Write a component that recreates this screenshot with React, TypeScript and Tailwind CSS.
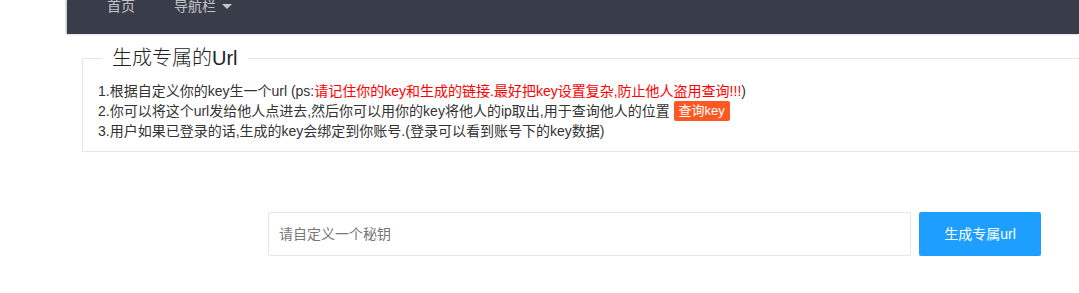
const font = { fontFamily: '"Liberation Sans", "Noto Sans CJK SC", sans-serif' };

export default function App() {
  return (
    <div className="relative w-[1079px] h-[293px] overflow-hidden bg-white text-[14px] text-[#333]" style={font}>
      {/* header, scrolled so only the bottom part shows */}
      <div className="ml-[67px] h-[34px] overflow-hidden bg-[#393D49] shadow-[-1px_0_2px_rgba(0,0,0,0.3)]">
        <div className="-mt-[24px] h-[60px] flex items-center pl-[40px] text-[14px] text-white/70">
          <span>首页</span>
          <span className="ml-[39px] flex items-center gap-[6px]">
            导航栏
            <span className="w-0 h-0 border-x-[5px] border-x-transparent border-t-[5px] border-t-white/70 mt-[1px]" />
          </span>
        </div>
      </div>

      <fieldset className="ml-[82px] mt-[12px] w-[1020px] border border-[#e6e6e6]">
        <legend className="ml-[19px] px-[10px] text-[20px] leading-[24px] font-light text-[#222]">生成专属的Url</legend>
        <div className="px-[15px] pt-[11px] pb-[10px] leading-[20px]">
          <p>
            1.根据自定义你的key生一个url (ps:
            <span className="text-[#ff0000]">请记住你的key和生成的链接.最好把key设置复杂,防止他人盗用查询!!!</span>)
          </p>
          <p>
            2.你可以将这个url发给他人点进去,然后你可以用你的key将他人的ip取出,用于查询他人的位置{' '}
            <span className="inline-block align-top h-[20px] leading-[20px] px-[5px] rounded-[2px] bg-[#FF5722] text-white text-[13px]">查询key</span>
          </p>
          <p>3.用户如果已登录的话,生成的key会绑定到你账号.(登录可以看到账号下的key数据)</p>
        </div>
      </fieldset>

      <div className="ml-[268px] mt-[60px] flex gap-[8px]">
        <input
          className="w-[643px] h-[44px] border border-[#e6e6e6] rounded-[2px] px-[10px] text-[14px] outline-none placeholder:text-[#777]"
          placeholder="请自定义一个秘钥"
          style={font}
        />
        <button className="w-[122px] h-[44px] rounded-[2px] bg-[#1E9FFF] text-white text-[14px]" style={font}>
          生成专属url
        </button>
      </div>
    </div>
  );
}
